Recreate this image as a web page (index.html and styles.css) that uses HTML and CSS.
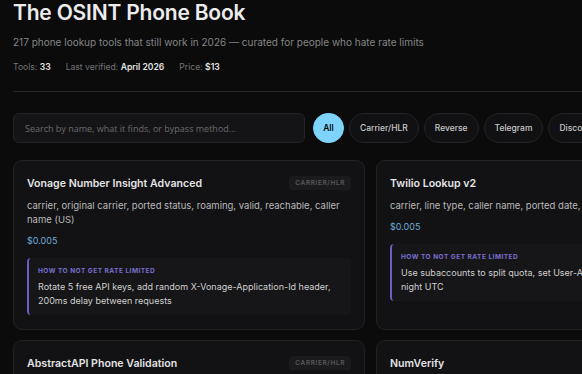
FILE: index.html
```html
<!DOCTYPE html>
<html lang="en">
<head>
  <meta charset="UTF-8">
  <meta name="viewport" content="width=device-width, initial-scale=1.0">
  <title>The OSINT Phone Book</title>
  <link rel="stylesheet" href="styles.css">
</head>
<body>
  <div class="page">
    <!-- header -->
    <header class="top">
      <h1>The OSINT Phone Book</h1>
      <p class="lead">217 phone lookup tools that still work in 2026 — curated for people who hate rate limits</p>
      <div class="meta">
        <span>Tools: <b>33</b></span>
        <span>Last verified: <b>April 2026</b></span>
        <span>Price: <b>$13</b></span>
      </div>
    </header>

    <!-- search + filters -->
    <div class="toolbar">
      <input class="search" type="text" placeholder="Search by name, what it finds, or bypass method...">
      <button class="pill active">All</button>
      <button class="pill">Carrier/HLR</button>
      <button class="pill">Reverse</button>
      <button class="pill">Telegram</button>
      <button class="pill">Discord</button>
      <button class="pill">WhatsApp</button>
    </div>

    <!-- tool cards -->
    <div class="grid">
      <div class="card">
        <div class="card-head">
          <h3>Vonage Number Insight Advanced</h3>
          <span class="tag">Carrier/HLR</span>
        </div>
        <p class="finds">carrier, original carrier, ported status, roaming, valid, reachable, caller name (US)</p>
        <p class="price">$0.005</p>
        <div class="tip">
          <h4>How to not get rate limited</h4>
          <p>Rotate 5 free API keys, add random X-Vonage-Application-Id header, 200ms delay between requests</p>
        </div>
      </div>
      <div class="card">
        <div class="card-head">
          <h3>Twilio Lookup v2</h3>
          <span class="tag">Carrier/HLR</span>
        </div>
        <p class="finds">carrier, line type, caller name, ported date, SIM swap</p>
        <p class="price">$0.005</p>
        <div class="tip">
          <h4>How to not get rate limited</h4>
          <p>Use subaccounts to split quota, set User-Agent per key, run jobs at night UTC</p>
        </div>
      </div>
      <div class="card">
        <div class="card-head">
          <h3>AbstractAPI Phone Validation</h3>
          <span class="tag">Carrier/HLR</span>
        </div>
        <p class="finds">valid, country, location, carrier, line type</p>
        <p class="price">Free tier</p>
      </div>
      <div class="card">
        <div class="card-head">
          <h3>NumVerify</h3>
          <span class="tag">Carrier/HLR</span>
        </div>
        <p class="finds">valid, country, location, carrier, line type</p>
        <p class="price">Free tier</p>
      </div>
    </div>
  </div>
</body>
</html>
```

FILE: styles.css
```css
/* reset */
* {
  margin: 0;
  padding: 0;
  box-sizing: border-box;
}
html, body {
  background: #0b0b0c;
  overflow: hidden;
}
body {
  font-family: 'Inter', 'Liberation Sans', sans-serif;
  color: #e6e6e6;
}
.page {
  width: 741px;
  padding: 0 13px;
}

/* header */
.top {
  padding-bottom: 17px;
  border-bottom: 1px solid #262628;
}
.top h1 {
  font-size: 21px;
  line-height: 26px;
  font-weight: 600;
  color: #ececec;
  letter-spacing: -0.2px;
}
.lead {
  margin-top: 8px;
  font-size: 10px;
  line-height: 16px;
  color: #858585;
}
.meta {
  margin-top: 10px;
  display: flex;
  gap: 15px;
  font-size: 8.6px;
  line-height: 14px;
  color: #737373;
}
.meta b {
  color: #e2e2e2;
  font-weight: 600;
}

/* toolbar */
.toolbar {
  margin-top: 21px;
  display: flex;
  align-items: center;
  gap: 5px;
}
.search {
  width: 292px;
  height: 30px;
  margin-right: 3px;
  padding: 0 11px;
  background: #141416;
  border: 1px solid #232326;
  border-radius: 6px;
  font-family: 'Open Sans', sans-serif;
  font-size: 9px;
  color: #ddd;
  outline: none;
}
.search::placeholder {
  color: #6b6b6e;
}
.pill {
  flex: none;
  height: 30px;
  padding: 0 10px;
  background: #111113;
  border: 1px solid #242427;
  border-radius: 15px;
  font-family: 'Inter', sans-serif;
  font-size: 8.5px;
  font-weight: 500;
  color: #c8c8c8;
}
.pill.active {
  width: 31px;
  padding: 0;
  background: #7dd3fc;
  border-color: #7dd3fc;
  color: #0b0b0c;
  font-weight: 600;
}

/* cards */
.grid {
  margin-top: 17px;
  display: grid;
  grid-template-columns: 352px 352px;
  gap: 10px 11px;
}
.card {
  background: #121214;
  border: 1px solid #222225;
  border-radius: 9px;
  padding: 14px 13px 14px;
}
.card-head {
  display: flex;
  justify-content: space-between;
  align-items: center;
  height: 16px;
}
.card h3 {
  font-size: 10.6px;
  font-weight: 600;
  color: #e4e4e4;
}
.tag {
  background: #1b1b1e;
  border-radius: 4px;
  padding: 3px 6px;
  font-size: 6.5px;
  font-weight: 600;
  letter-spacing: 0.6px;
  text-transform: uppercase;
  color: #58585c;
}
.finds {
  margin-top: 8px;
  font-size: 9.5px;
  line-height: 14px;
  color: #b9b9b9;
}
.price {
  margin-top: 7px;
  font-size: 9px;
  line-height: 14px;
  color: #6ea9d4;
}
.tip {
  margin-top: 10px;
  padding: 8px 9px 7px;
  background: #161618;
  border-left: 2px solid #6b5fc2;
  border-radius: 4px;
}
.tip h4 {
  font-size: 6.5px;
  line-height: 10px;
  font-weight: 700;
  letter-spacing: 0.5px;
  text-transform: uppercase;
  color: #7a6fd0;
}
.tip p {
  margin-top: 4px;
  font-size: 9px;
  line-height: 14px;
  color: #cfcfcf;
}
```
